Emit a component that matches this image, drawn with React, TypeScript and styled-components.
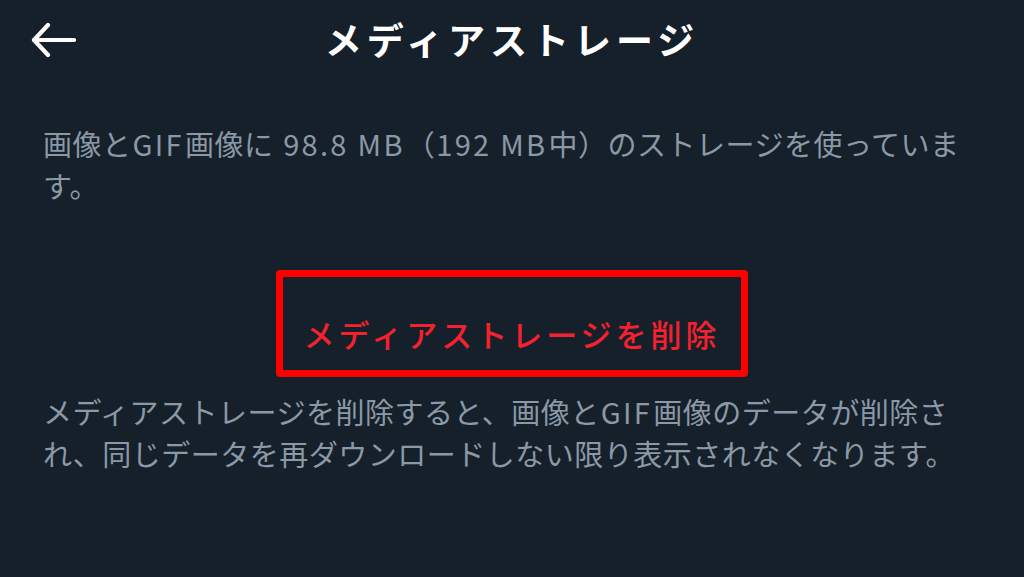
import React from "react"
import styled, { createGlobalStyle } from "styled-components"

const GlobalStyle = createGlobalStyle`
  html, body {
    margin: 0;
    padding: 0;
    background: #15202b;
  }
  body {
    font-family: "Noto Sans CJK JP", "Noto Sans", sans-serif;
  }
`

const Page = styled.div`
  width: 1024px;
  height: 577px;
  background: #15202b;
  display: flex;
  flex-direction: column;
  overflow: hidden;
`

const Header = styled.header`
  height: 80px;
  display: grid;
  grid-template-columns: 110px 1fr 110px;
  align-items: center;
`

const BackButton = styled.button`
  background: none;
  border: none;
  padding: 0 0 0 30px;
  display: flex;
  align-items: center;
  cursor: pointer;
`

const Title = styled.h1`
  margin: 0;
  text-align: center;
  color: #ffffff;
  font-size: 37px;
  font-weight: 700;
  letter-spacing: 5px;
  padding-bottom: 2px;
`

const Content = styled.main`
  padding: 42px 43px 0;
  display: flex;
  flex-direction: column;
`

const Note = styled.p<{ $top?: number }>`
  margin: ${(p) => p.$top ?? 0}px 0 0;
  color: #8b98a5;
  font-size: 29px;
  line-height: 42px;
  letter-spacing: 0.5px;
`

// latin runs are set a little looser, like the system font on the phone
const Latin = styled.span`
  letter-spacing: 2.3px;
  margin: 0 1px;
`

const ButtonRow = styled.div`
  display: flex;
  justify-content: center;
  margin-top: 64px;
`

const DeleteButton = styled.button`
  width: 472px;
  height: 107px;
  box-sizing: border-box;
  border: 7px solid #ff0000;
  border-radius: 4px;
  background: transparent;
  color: #f4212e;
  font-family: "Noto Sans CJK JP", "Noto Sans", sans-serif;
  font-size: 31px;
  font-weight: 500;
  letter-spacing: 4px;
  padding: 20px 0 0;
  cursor: pointer;
`

function BackArrow() {
  return (
    <svg width="46" height="36" viewBox="0 0 46 36" fill="none">
      <path
        d="M44 18H5M18 3L4 18L18 33"
        stroke="#ffffff"
        strokeWidth="4.2"
        strokeLinecap="round"
        strokeLinejoin="round"
      />
    </svg>
  )
}

export default function App() {
  return (
    <>
      <GlobalStyle />
      <Page>
        <Header>
          <BackButton aria-label="戻る">
            <BackArrow />
          </BackButton>
          <Title>メディアストレージ</Title>
          <div />
        </Header>
        <Content>
          <Note>
            画像と<Latin>GIF</Latin>画像に<Latin> 98.8 MB</Latin>（<Latin>192 MB</Latin>中）のストレージを使っています。
          </Note>
          <ButtonRow>
            <DeleteButton>メディアストレージを削除</DeleteButton>
          </ButtonRow>
          <Note $top={13}>
            メディアストレージを削除すると、画像と<Latin>GIF</Latin>画像のデータが削除され、同じデータを再ダウンロードしない限り表示されなくなります。
          </Note>
        </Content>
      </Page>
    </>
  )
}
